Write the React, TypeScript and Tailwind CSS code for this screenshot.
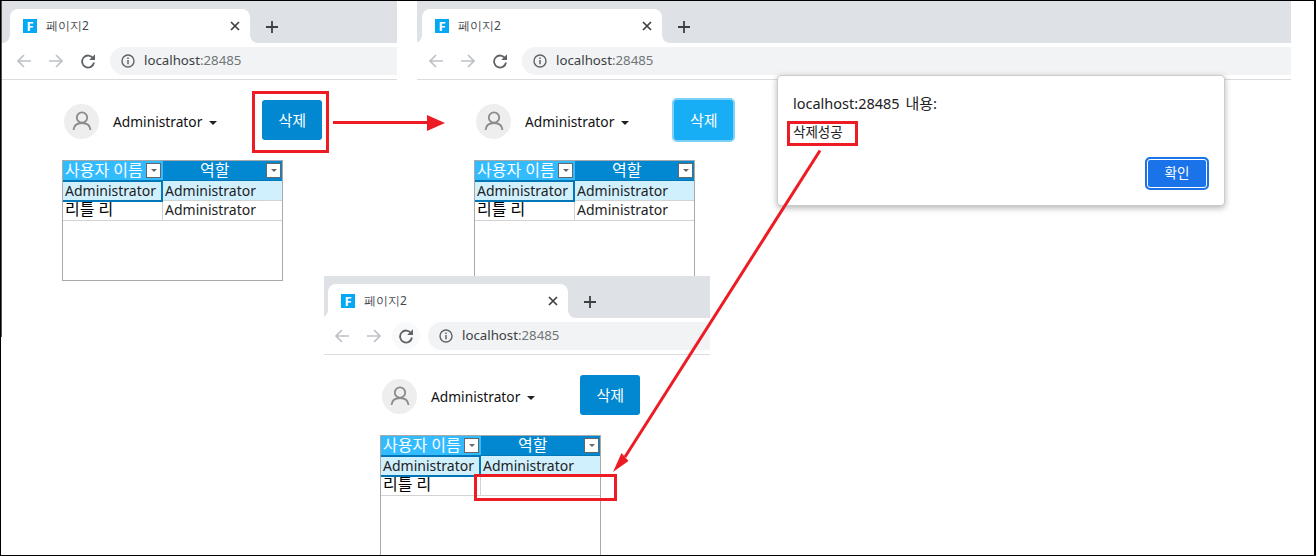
const sans = "font-['Noto_Sans','Noto_Sans_CJK_KR',sans-serif]";

function Caret({ className }: { className: string }) {
  return <span className={`border-x-[4px] border-t-[4px] border-x-transparent ${className}`} />;
}

function FilterBox() {
  return (
    <span className="flex size-[15px] items-center justify-center border border-[#666666] bg-white">
      <span className="border-x-[3px] border-t-[3px] border-x-transparent border-t-[#666666]" />
    </span>
  );
}

function BrowserBar({ stripClass, reloadClass = "" }: { stripClass: string; reloadClass?: string }) {
  return (
    <>
      <div className={`flex h-[42px] items-end bg-[#dee1e6] ${stripClass}`}>
        <div className="relative flex h-[34px] w-[240px] items-center rounded-t-lg bg-white pl-[13px] pr-[10px]">
          <span className="absolute -left-2 bottom-0 size-2 bg-white">
            <span className="block size-2 rounded-br-lg bg-[#dee1e6]" />
          </span>
          <span className="absolute -right-2 bottom-0 size-2 bg-white">
            <span className="block size-2 rounded-bl-lg bg-[#dee1e6]" />
          </span>
          <span className="flex size-[14px] items-center justify-center bg-[#03a9f4] text-[13px] leading-none font-bold text-white">F</span>
          <span className="ml-[9px] flex-1 text-[12px] text-[#45494d]">페이지2</span>
          <svg width="10" height="10" viewBox="0 0 10 10" stroke="#3c4043" strokeWidth="1.7" fill="none">
            <path d="M1 1l8 8M9 1l-8 8" />
          </svg>
        </div>
        <svg className="mb-[10px] ml-[16px]" width="12" height="12" viewBox="0 0 12 12" stroke="#3c4043" strokeWidth="1.8" fill="none">
          <path d="M6 0v12M0 6h12" />
        </svg>
      </div>
      <div className={`flex h-[37px] items-center border-b border-[#dadce0] bg-white ${stripClass}`}>
        <svg className="ml-[6px]" width="16" height="16" viewBox="0 0 16 16" stroke="#bdc1c6" strokeWidth="1.7" fill="none">
          <path d="M15 8H2M8 2L2 8l6 6" />
        </svg>
        <svg className="ml-[16px]" width="16" height="16" viewBox="0 0 16 16" stroke="#bdc1c6" strokeWidth="1.7" fill="none">
          <path d="M1 8h13M8 2l6 6-6 6" />
        </svg>
        <span className={`ml-[10px] flex size-[28px] items-center justify-center rounded-full ${reloadClass}`}>
          <svg width="16" height="16" viewBox="0 0 16 16" fill="none">
            <path d="M13.2 5.4A6 6 0 1 0 14 9.5" stroke="#5f6368" strokeWidth="1.8" />
            <path d="M15 1.2V7H9.2z" fill="#5f6368" />
          </svg>
        </span>
        <div className="ml-[8px] flex h-[28px] flex-1 items-center rounded-l-full bg-[#f1f3f4] pl-[11px]">
          <svg width="14" height="14" viewBox="0 0 14 14" fill="none">
            <circle cx="7" cy="7" r="6" stroke="#5f6368" strokeWidth="1.4" />
            <path d="M7 6v4.2M7 3.4v1.5" stroke="#5f6368" strokeWidth="1.5" />
          </svg>
          <span className={`ml-[9px] text-[13.25px] text-[#3c4043] ${sans}`}>
            localhost<span className="text-[#70757a]">:28485</span>
          </span>
        </div>
      </div>
    </>
  );
}

function UserRow({ buttonClass }: { buttonClass: string }) {
  return (
    <div className="flex h-[80px] items-center pl-[2px] pt-[2px]">
      <span className="flex size-[35px] items-center justify-center rounded-full bg-[#eeeeee]">
        <svg width="22" height="22" viewBox="0 0 22 22" fill="none" stroke="#8a8a8a" strokeWidth="1.8">
          <circle cx="11" cy="7.500" r="5.200" />
          <path d="M2.500 20c.5-5 4-7 8.500-7s8 2 8.500 7" />
        </svg>
      </span>
      <span className={`ml-[14px] pt-[3px] text-[13.75px] text-[#111111] ${sans}`}>Administrator</span>
      <Caret className="ml-[7px] mt-[3px] border-t-[#222222]" />
      <span className={`flex -translate-y-px items-center justify-center text-[15px] text-white ${buttonClass} ${sans}`}>
        삭제
      </span>
    </div>
  );
}

function UserTable({ clearedRole }: { clearedRole?: boolean }) {
  return (
    <div className={`h-[121px] w-[221px] border border-[#a9a9a9] bg-white text-[14px] text-[#222222] ${sans}`}>
      <div className="flex h-[20px] text-[16px] leading-none text-white">
        <div className="flex w-[100px] items-center justify-between border-b border-[#0277b5] bg-[#33bbff] pl-[2px] pr-[2px]">
          <span className="-mt-px whitespace-nowrap">사용자 이름</span>
          <FilterBox />
        </div>
        <div className="flex flex-1 items-center justify-between border-b border-[#0277b5] bg-[#0288d1] pl-[37px] pr-px">
          <span className="-mt-px">역할</span>
          <FilterBox />
        </div>
      </div>
      <div className="flex h-[20px] bg-[#d0f0fe]">
        <div className="relative flex w-[100px] items-center pb-[2px] pl-[2px]">
          <span className="absolute inset-x-0 -bottom-px -top-px border-y-2 border-r-2 border-[#0277b5]" />
          Administrator
        </div>
        <div className="flex flex-1 items-center border-b border-[#d3d3d3] pb-px pl-[2px]">Administrator</div>
      </div>
      <div className="flex h-[20px] border-b border-[#d3d3d3]">
        <div className="flex w-[100px] items-start border-r border-[#d3d3d3] pl-[2px] text-[16px] leading-[16px] text-black">리틀 리</div>
        <div className="flex flex-1 items-center pb-[2px] pl-[2px]">{clearedRole ? "" : "Administrator"}</div>
      </div>
    </div>
  );
}

function Page({ padClass, buttonClass, clearedRole }: { padClass: string; buttonClass: string; clearedRole?: boolean }) {
  return (
    <div className={padClass}>
      <UserRow buttonClass={buttonClass} />
      <UserTable clearedRole={clearedRole} />
    </div>
  );
}

function AlertDialog() {
  return (
    <div className={`absolute left-[777px] top-[75px] flex h-[131px] w-[448px] flex-col rounded-[4px] border border-[#cccccc] bg-white px-[15px] pt-[17px] shadow-[0_2px_6px_rgba(0,0,0,0.3)] ${sans}`}>
      <p className="text-[14.500px] leading-[20px] text-[#202124]">
        localhost:28485 <span className="ml-[2px] text-[15px]">내용:</span>
      </p>
      <p className="mt-[11px] text-[13.500px] leading-[16px] text-[#202124]">삭제성공</p>
      <div className="mt-[17px] flex justify-end">
        <span className="h-[33px] w-[64px] rounded-[5px] border-2 border-[#1a73e8] bg-[#1a73e8]">
          <span className="flex size-full items-center justify-center rounded-[3px] border border-white text-[13.500px] text-white">
            확인
          </span>
        </span>
      </div>
    </div>
  );
}

function Annotations() {
  return (
    <svg className="absolute left-0 top-0" width="1316" height="556" fill="none" stroke="#ed1c24" strokeWidth="3">
      <rect x="253.500" y="92.500" width="74" height="59" />
      <path d="M333 122.500H428" />
      <path d="M427 115L445 123L427 131Z" fill="#ed1c24" stroke="none" />
      <rect x="788.500" y="122.500" width="68" height="22" />
      <path d="M820 150.500L625 457" />
      <path d="M613 472L621.500 453L628.500 461Z" fill="#ed1c24" stroke="none" />
      <rect x="475.500" y="475.500" width="140" height="24" />
    </svg>
  );
}

export default function App() {
  return (
    <div className="relative h-[556px] w-[1316px] overflow-hidden bg-white">
      <div className="absolute left-px top-px h-[336px] w-[396px] overflow-hidden border-l border-[#555555]">
        <BrowserBar stripClass="pl-[8px]" />
        <Page padClass="pl-[60px]" buttonClass="ml-[45px] h-[40px] w-[60px] rounded-[3px] bg-[#0288d1]" />
      </div>

      <div className="absolute left-[417px] top-px h-[300px] w-[874px] overflow-hidden">
        <BrowserBar stripClass="pl-[5px]" />
        <Page padClass="pl-[57px]" buttonClass="ml-[43px] h-[44px] w-[63px] rounded-[5px] border-2 border-[#7ed0f8] bg-[#17aef5]" />
      </div>

      <div className="absolute left-[324px] top-[276px] h-[279px] w-[386px] overflow-hidden bg-white">
        <BrowserBar stripClass="pl-[4px]" reloadClass="bg-[#f8f9fa]" />
        <Page padClass="pl-[56px]" buttonClass="ml-[45px] h-[40px] w-[60px] rounded-[3px] bg-[#0288d1]" clearedRole />
      </div>

      <AlertDialog />
      <Annotations />
      <div className="pointer-events-none absolute inset-0 border-y border-l border-r-2 border-black" />
    </div>
  );
}
